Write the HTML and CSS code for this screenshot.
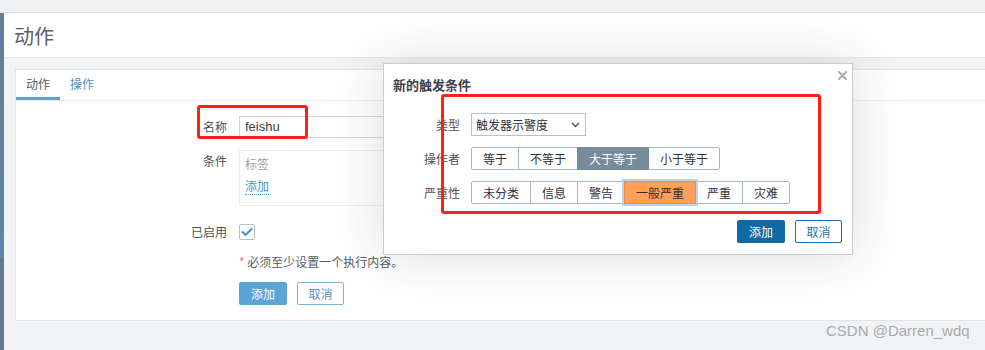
FILE: index.html
```html
<!DOCTYPE html>
<html lang="zh">
<head>
<meta charset="utf-8">
<title>动作</title>
<link rel="stylesheet" href="styles.css">
</head>
<body>
<div class="topbar"></div>
<div class="main">
  <div class="sidebar"></div>
  <div class="content">
    <div class="header"><h1 class="title">动作</h1></div>
    <div class="card">
      <div class="tabs">
        <span class="tab active">动作</span>
        <span class="tab link">操作</span>
      </div>
      <div class="form">
        <div class="frow r-name">
          <div class="flabel">名称</div>
          <div class="input">feishu</div>
        </div>
        <div class="frow r-cond">
          <div class="flabel">条件</div>
          <div class="condbox">
            <div class="cond-head">标签</div>
            <div class="cond-add"><span class="dotlink">添加</span></div>
          </div>
        </div>
        <div class="frow r-enabled">
          <div class="flabel">已启用</div>
          <div class="checkbox">
            <svg width="12" height="10" viewBox="0 0 12 10"><path d="M1.5 5 L4.5 8 L10.5 2" fill="none" stroke="#4b9ad2" stroke-width="2.2" stroke-linecap="round" stroke-linejoin="round"/></svg>
          </div>
        </div>
        <div class="frow r-note">
          <div class="flabel"></div>
          <div class="note"><span class="star">*</span> 必须至少设置一个执行内容。</div>
        </div>
        <div class="frow r-btns">
          <div class="flabel"></div>
          <div class="btns">
            <span class="btn btn-light">添加</span>
            <span class="btn btn-outline-light">取消</span>
          </div>
        </div>
      </div>
    </div>
  </div>
</div>

<div class="modal">
  <span class="close"><svg width="9" height="9" viewBox="0 0 9 9"><path d="M1 1 L8 8 M8 1 L1 8" stroke="#a9b1b7" stroke-width="2.2" stroke-linecap="round"/></svg></span>
  <div class="modal-title">新的触发条件</div>
  <div class="modal-body">
    <div class="mrow">
      <div class="mlabel">类型</div>
      <div class="select">
        <span>触发器示警度</span>
        <svg width="9" height="6" viewBox="0 0 9 6"><path d="M1 1 L4.5 4.5 L8 1" fill="none" stroke="#4d5358" stroke-width="1.4"/></svg>
      </div>
    </div>
    <div class="mrow">
      <div class="mlabel">操作者</div>
      <div class="seg">
        <span class="segbtn">等于</span>
        <span class="segbtn">不等于</span>
        <span class="segbtn sel-gray">大于等于</span>
        <span class="segbtn">小于等于</span>
      </div>
    </div>
    <div class="mrow">
      <div class="mlabel">严重性</div>
      <div class="seg">
        <span class="segbtn">未分类</span>
        <span class="segbtn">信息</span>
        <span class="segbtn">警告</span>
        <span class="segbtn sel-orange">一般严重</span>
        <span class="segbtn">严重</span>
        <span class="segbtn">灾难</span>
      </div>
    </div>
  </div>
  <div class="modal-foot">
    <span class="btn btn-dark">添加</span>
    <span class="btn btn-outline-dark">取消</span>
  </div>
</div>

<div class="mark mark-name"></div>
<div class="mark mark-modal"></div>
<div class="watermark">CSDN @Darren_wdq</div>
</body>
</html>
```

FILE: styles.css
```css
html, body {
  margin: 0;
  padding: 0;
}
body {
  width: 985px;
  height: 350px;
  overflow: hidden;
  background: #f2f3f5;
  font-family: "Noto Sans CJK SC", "Liberation Sans", sans-serif;
  font-size: 12px;
  color: #4d5358;
  position: relative;
}
.topbar {
  height: 12px;
  background: #eff1f3;
  border-bottom: 1px solid #dcdfe2;
}
.main {
  display: flex;
  height: 337px;
}
.sidebar {
  width: 4px;
  flex: none;
  background: linear-gradient(#5d7f9c 0, #5f86a6 245px, #687a87 245px, #687a87 100%);
}
.content {
  flex: 1;
  min-width: 0;
}
.header {
  height: 44px;
  background: #fff;
  border-bottom: 1px solid #e4e7ea;
  display: flex;
  align-items: center;
  padding-left: 10px;
}
.title {
  margin: 0;
  font-size: 20px;
  font-weight: normal;
  color: #5a6065;
  line-height: 26px;
  position: relative;
  top: 1px;
}
.card {
  margin: 11px 0 0 11px;
  height: 252px;
  background: #fff;
  border: 1px solid #e2e5e8;
  border-right: none;
  box-sizing: border-box;
}
.tabs {
  display: flex;
  height: 31px;
  border-bottom: 1px solid #ebeef0;
  box-sizing: border-box;
}
.tab {
  padding: 0 10px;
  line-height: 28px;
  color: #555b60;
}
.tab.active {
  border-bottom: 3px solid #5ba3d1;
}
.tab.link {
  color: #4895c5;
}
.form {
  padding-top: 15px;
}
.frow {
  display: flex;
  align-items: flex-start;
}
.flabel {
  width: 211px;
  padding-right: 12px;
  text-align: right;
  line-height: 22px;
  flex: none;
}
.r-name { margin-bottom: 12px; }
.r-cond { margin-bottom: 18px; }
.r-enabled { margin-bottom: 15px; }
.r-enabled .flabel { line-height: 16px; }
.r-note { margin-bottom: 13px; }
.input {
  width: 453px;
  height: 22px;
  box-sizing: border-box;
  border: 1px solid #cfd5da;
  padding-left: 5px;
  line-height: 20px;
  color: #3a4045;
  font-size: 13px;
  font-family: "Liberation Sans", "Noto Sans CJK SC", sans-serif;
}
.condbox {
  width: 453px;
  height: 56px;
  box-sizing: border-box;
  border: 1px solid #ebeef0;
  padding: 2px 5px 1px;
}
.cond-head {
  line-height: 22px;
  color: #9aa1a7;
}
.cond-add {
  line-height: 22px;
}
.dotlink {
  color: #4895c5;
  border-bottom: 1px dotted #4895c5;
}
.checkbox {
  width: 16px;
  height: 16px;
  box-sizing: border-box;
  border: 1px solid #b5bfc6;
  border-radius: 2px;
  display: flex;
  align-items: center;
  justify-content: center;
}
.note {
  line-height: 14px;
  color: #555b60;
}
.star {
  color: #e47a7a;
}
.btns {
  display: flex;
  gap: 10px;
}
.btn {
  height: 23px;
  box-sizing: border-box;
  display: inline-flex;
  align-items: center;
  justify-content: center;
  border-radius: 2px;
  font-size: 12px;
}
.btn-light {
  width: 48px;
  background: #5ba5d4;
  color: #fff;
}
.btn-outline-light {
  width: 47px;
  border: 1px solid #7cb3d8;
  color: #5a8fb9;
  background: #fff;
}
.modal {
  position: absolute;
  left: 383px;
  top: 63px;
  width: 470px;
  height: 192px;
  box-sizing: border-box;
  background: #fff;
  border: 1px solid #c6cdd2;
  box-shadow: 0 0 50px rgba(30, 40, 50, 0.16);
  padding: 11px 10px 0 9px;
}
.close {
  position: absolute;
  left: 454px;
  top: 7px;
  width: 9px;
  height: 9px;
  display: flex;
}
.modal-title {
  font-size: 13px;
  font-weight: bold;
  line-height: 20px;
  color: #3a4248;
}
.modal-body {
  margin-top: 18px;
  display: flex;
  flex-direction: column;
  gap: 11px;
}
.mrow {
  display: flex;
  align-items: center;
}
.mlabel {
  width: 67px;
  padding-right: 11px;
  text-align: right;
  flex: none;
  color: #4d5358;
}
.select {
  width: 115px;
  height: 23px;
  box-sizing: border-box;
  border: 1px solid #b6c1c8;
  display: flex;
  align-items: center;
  justify-content: space-between;
  padding: 0 5px 0 4px;
  color: #2d3338;
}
.seg {
  display: flex;
}
.segbtn {
  height: 23px;
  box-sizing: border-box;
  border: 1px solid #aab7bf;
  margin-left: -1px;
  padding: 0 11px;
  display: inline-flex;
  align-items: center;
  color: #2d3338;
  background: #fff;
  position: relative;
}
.segbtn:first-child {
  margin-left: 0;
  border-radius: 2px 0 0 2px;
}
.segbtn:last-child {
  border-radius: 0 2px 2px 0;
}
.sel-gray {
  background: #768d99;
  border-color: #768d99;
  color: #fff;
  z-index: 1;
}
.sel-orange {
  background: #ffa059;
  border-color: #e6904f;
  color: #3a2b1e;
  box-shadow: 0 0 0 2px #b4d5f1;
  z-index: 2;
}
.modal-foot {
  margin-top: 16px;
  display: flex;
  justify-content: flex-end;
  gap: 10px;
}
.btn-dark {
  width: 48px;
  background: #0f6aa4;
  color: #fff;
}
.btn-outline-dark {
  width: 47px;
  border: 1px solid #1f70a8;
  color: #1f70a8;
  background: #fff;
}
.mark {
  position: absolute;
  border: 3px solid #ff1f17;
  border-radius: 3px;
  box-sizing: border-box;
}
.mark-name {
  left: 197px;
  top: 105px;
  width: 111px;
  height: 34px;
}
.mark-modal {
  left: 441px;
  top: 94px;
  width: 380px;
  height: 120px;
}
.watermark {
  position: absolute;
  left: 826px;
  top: 322px;
  font-family: "Liberation Sans", sans-serif;
  font-size: 15px;
  line-height: 18px;
  color: #a7abaf;
}
```
